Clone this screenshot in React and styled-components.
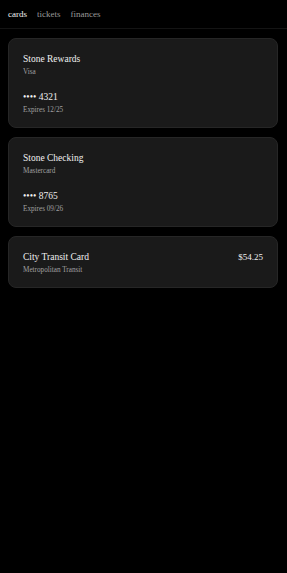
import React from 'react'
import styled, { createGlobalStyle } from 'styled-components'

const GlobalStyle = createGlobalStyle`
    html, body {
        margin: 0;
        padding: 0;
        background: #000;
    }
    body {
        font-family: "Liberation Serif", "Times New Roman", serif;
        color: #f2f2f2;
    }
`

const cards = [
    { name: 'Stone Rewards', network: 'Visa', last4: '4321', expires: '12/25' },
    { name: 'Stone Checking', network: 'Mastercard', last4: '8765', expires: '09/26' },
]

function App() {
    return (
        <Page>
            <GlobalStyle />
            <Nav>
                <Tab active>cards</Tab>
                <Tab>tickets</Tab>
                <Tab>finances</Tab>
            </Nav>
            <List>
                {cards.map((c) => (
                    <Card key={c.last4}>
                        <Title>{c.name}</Title>
                        <Sub>{c.network}</Sub>
                        <Number>•••• {c.last4}</Number>
                        <Sub>Expires {c.expires}</Sub>
                    </Card>
                ))}
                <Card>
                    <Row>
                        <div>
                            <Title>City Transit Card</Title>
                            <Sub>Metropolitan Transit</Sub>
                        </div>
                        <Balance>$54.25</Balance>
                    </Row>
                </Card>
            </List>
        </Page>
    )
}

export default App

const Page = styled.div`
    min-height: 100vh;
    background: #000;
`

const Nav = styled.nav`
    display: flex;
    gap: 10px;
    padding: 6px 8px;
    border-bottom: 1px solid #141414;
`

const Tab = styled.span`
    font-size: 9px;
    line-height: 16px;
    color: ${(p) => (p.active ? '#f2f2f2' : '#9a9a9a')};
`

const List = styled.div`
    display: flex;
    flex-direction: column;
    gap: 9px;
    padding: 9px 9px 9px 8px;
`

const Card = styled.div`
    background: #1a1a1a;
    border: 1px solid #262626;
    border-radius: 8px;
    padding: 13px 14px 11px 14px;
`

const Title = styled.div`
    font-size: 9.5px;
    line-height: 14px;
    color: #f0f0f0;
`

const Sub = styled.div`
    font-size: 7.2px;
    line-height: 12px;
    color: #a0a0a0;
`

const Number = styled.div`
    margin-top: 12px;
    font-size: 9.5px;
    line-height: 14px;
    color: #f0f0f0;
`

const Row = styled.div`
    display: flex;
    justify-content: space-between;
    align-items: flex-start;
`

const Balance = styled.div`
    font-size: 9px;
    line-height: 14px;
    color: #f0f0f0;
`
